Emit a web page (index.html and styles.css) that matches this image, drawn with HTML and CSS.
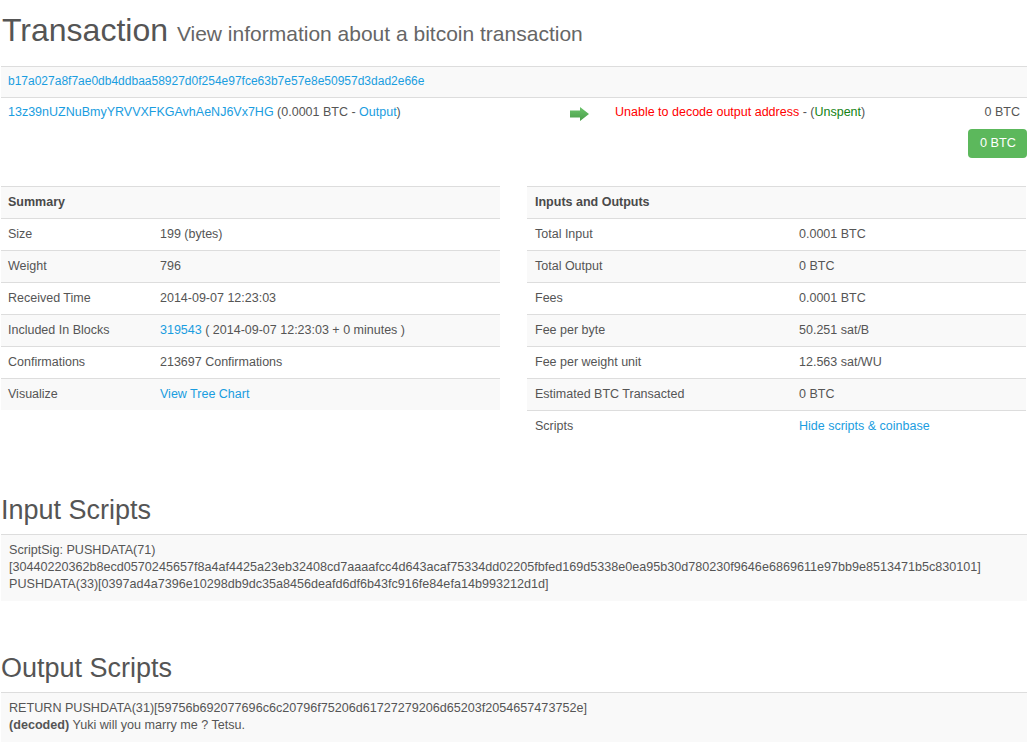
FILE: index.html
```html
<!DOCTYPE html>
<html>
<head>
<meta charset="utf-8">
<title>Transaction</title>
<link rel="stylesheet" href="styles.css">
</head>
<body>
<div class="page">
  <h1 class="title">Transaction <small class="subtitle">View information about a bitcoin transaction</small></h1>

  <div class="tx">
    <div class="tx-hash"><a href="#">b17a027a8f7ae0db4ddbaa58927d0f254e97fce63b7e57e8e50957d3dad2e66e</a></div>
    <div class="tx-io">
      <div class="tx-in"><a href="#">13z39nUZNuBmyYRVVXFKGAvhAeNJ6Vx7HG</a> (0.0001 BTC - <a href="#">Output</a>)</div>
      <div class="tx-arrow">
        <svg width="19" height="14" viewBox="0 0 19 14">
          <defs>
            <linearGradient id="ag" x1="0" y1="0" x2="0" y2="1">
              <stop offset="0" stop-color="#6cc46c"/>
              <stop offset="1" stop-color="#4a9e4a"/>
            </linearGradient>
          </defs>
          <path d="M0 3.5 H10 V0 L19 7 L10 14 V10.5 H0 Z" fill="url(#ag)"/>
        </svg>
      </div>
      <div class="tx-out"><span class="err">Unable to decode output address</span> - (<span class="unspent">Unspent</span>)</div>
      <div class="tx-amt">0 BTC</div>
    </div>
    <div class="tx-total"><span class="btn-success">0 BTC</span></div>
  </div>

  <div class="cols">
    <table class="info info-left">
      <tr><th colspan="2">Summary</th></tr>
      <tr><td class="lbl">Size</td><td>199 (bytes)</td></tr>
      <tr><td class="lbl">Weight</td><td>796</td></tr>
      <tr><td class="lbl">Received Time</td><td>2014-09-07 12:23:03</td></tr>
      <tr><td class="lbl">Included In Blocks</td><td><a href="#">319543</a> ( 2014-09-07 12:23:03 + 0 minutes )</td></tr>
      <tr><td class="lbl">Confirmations</td><td>213697 Confirmations</td></tr>
      <tr><td class="lbl">Visualize</td><td><a href="#">View Tree Chart</a></td></tr>
    </table>
    <table class="info info-right">
      <tr><th colspan="2">Inputs and Outputs</th></tr>
      <tr><td class="lbl">Total Input</td><td>0.0001 BTC</td></tr>
      <tr><td class="lbl">Total Output</td><td>0 BTC</td></tr>
      <tr><td class="lbl">Fees</td><td>0.0001 BTC</td></tr>
      <tr><td class="lbl">Fee per byte</td><td>50.251 sat/B</td></tr>
      <tr><td class="lbl">Fee per weight unit</td><td>12.563 sat/WU</td></tr>
      <tr><td class="lbl">Estimated BTC Transacted</td><td>0 BTC</td></tr>
      <tr><td class="lbl">Scripts</td><td><a href="#">Hide scripts &amp; coinbase</a></td></tr>
    </table>
  </div>

  <h2 class="section">Input Scripts</h2>
  <div class="script">ScriptSig: PUSHDATA(71)<br>[30440220362b8ecd0570245657f8a4af4425a23eb32408cd7aaaafcc4d643acaf75334dd02205fbfed169d5338e0ea95b30d780230f9646e6869611e97bb9e8513471b5c830101]<br>PUSHDATA(33)[0397ad4a7396e10298db9dc35a8456deafd6df6b43fc916fe84efa14b993212d1d]</div>

  <h2 class="section section-out">Output Scripts</h2>
  <div class="script">RETURN PUSHDATA(31)[59756b692077696c6c20796f75206d61727279206d65203f2054657473752e]<br><b>(decoded)</b> Yuki will you marry me ? Tetsu.</div>
</div>
</body>
</html>
```

FILE: styles.css
```css
html, body {
  margin: 0;
  padding: 0;
  background: #fff;
}

body {
  font-family: "Liberation Sans", Arial, sans-serif;
  font-size: 12.5px;
  line-height: 17px;
  color: #555;
}

a {
  color: #1a9de0;
  text-decoration: none;
}

.page {
  padding: 0 2px 0 1px;
}

.title {
  margin: 13px 0 18px 1px;
  font-size: 32px;
  line-height: 1.1;
  font-weight: normal;
  color: #555;
}

.subtitle {
  font-size: 21px;
  color: #666;
}

/* transaction block */
.tx-hash {
  border-top: 1px solid #ddd;
  background: #f9f9f9;
  padding: 6px 7px 7px;
  font-size: 12px;
}

.tx-io {
  display: flex;
  align-items: flex-start;
  border-top: 1px solid #ddd;
  padding: 6px 7px 8px;
}

.tx-in {
  flex: 0 0 562px;
}

.tx-arrow {
  flex: 0 0 19px;
  margin-right: 26px;
  padding-top: 3px;
  height: 14px;
}

.tx-arrow svg {
  display: block;
}

.tx-out {
  flex: 1;
}

.err {
  color: #f00;
}

.unspent {
  color: #138213;
}

.tx-amt {
  text-align: right;
}

.tx-total {
  display: flex;
  justify-content: flex-end;
}

.btn-success {
  display: inline-block;
  height: 29px;
  line-height: 29px;
  padding: 0 11px 0 12px;
  background: #5cb85c;
  border-radius: 4px;
  color: #fff;
  font-size: 12.7px;
}

/* info tables */
.cols {
  display: grid;
  grid-template-columns: 499px 499px;
  column-gap: 27px;
  align-items: start;
  margin-top: 28px;
}

.info {
  width: 100%;
  border-collapse: collapse;
}

.info th,
.info td {
  border-top: 1px solid #ddd;
  padding: 7px 7px;
  text-align: left;
  vertical-align: top;
}

.info-right th,
.info-right td {
  padding-left: 8px;
}

.info th {
  font-weight: bold;
  color: #4a4a4a;
}

.info tr:nth-child(odd) {
  background: #f9f9f9;
}

.info-left .lbl {
  width: 138px;
}

.info-right .lbl {
  width: 249px;
}

/* scripts */
.section {
  margin: 54px 0 8px;
  font-size: 27px;
  line-height: 1.1;
  font-weight: normal;
  color: #555;
}

.section-out {
  margin-top: 53px;
  margin-bottom: 8px;
}

.script {
  border-top: 1px solid #ddd;
  background: #f9f9f9;
  padding: 7px 8px 8px;
  white-space: nowrap;
  font-size: 12.6px;
}

.script b {
  font-weight: bold;
}
```
